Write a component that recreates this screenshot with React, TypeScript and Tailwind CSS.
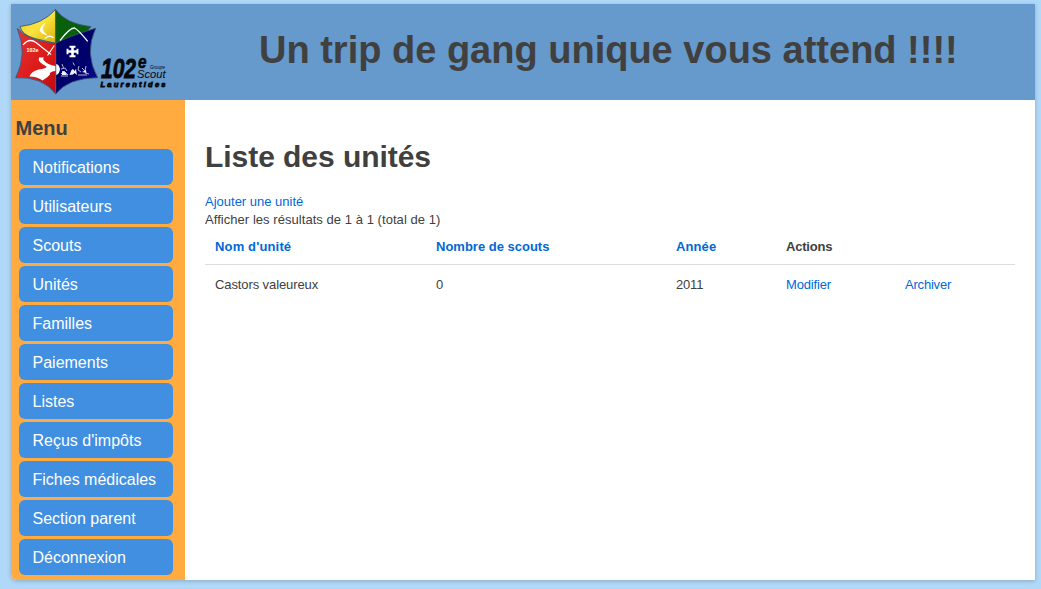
const menu = [
  'Notifications',
  'Utilisateurs',
  'Scouts',
  'Unités',
  'Familles',
  'Paiements',
  'Listes',
  "Reçus d'impôts",
  'Fiches médicales',
  'Section parent',
  'Déconnexion',
];

function Logo() {
  return (
    <svg width="160" height="96" viewBox="0 0 160 96" className="shrink-0" aria-label="102e Groupe Scout Laurentides">
      <defs>
        <linearGradient id="yellow" x1="0" y1="0" x2="1" y2="1">
          <stop offset="0" stopColor="#e8c81c" />
          <stop offset="0.5" stopColor="#fae43c" />
          <stop offset="1" stopColor="#d8b010" />
        </linearGradient>
        <linearGradient id="red" x1="0" y1="0" x2="1" y2="1">
          <stop offset="0" stopColor="#e43434" />
          <stop offset="0.6" stopColor="#dc1818" />
          <stop offset="1" stopColor="#b80c10" />
        </linearGradient>
        <linearGradient id="blue" x1="0" y1="0" x2="1" y2="1">
          <stop offset="0" stopColor="#000064" />
          <stop offset="0.6" stopColor="#00006c" />
          <stop offset="1" stopColor="#10109c" />
        </linearGradient>
      </defs>
      <g stroke="#35506e" strokeWidth="0.8" strokeLinejoin="round">
        <path d="M44.500 5.500 Q32 20 9 22.500 Q11 31 24 34.500 L44.500 39.300 Z" fill="url(#yellow)" />
        <path d="M44.500 5.500 Q55 20 80 22.700 Q74 31 62 34 L44.500 39.300 Z" fill="#08600c" />
        <path d="M6.300 24.500 Q17 50 4.700 73.700 Q31 72 44.700 90 L44.700 39.300 Q17 37 6.300 24.500 Z" fill="url(#red)" />
        <path d="M44.700 39.300 Q56 33 84.700 24.200 Q73 49 86.700 73.700 Q57 74 44.700 90 Z" fill="url(#blue)" />
      </g>
      <path d="M44.600 6 V90" stroke="#4a6270" strokeWidth="1" />
      <path d="M34 19 Q23.500 28 35.500 30.800 Q28.500 26.500 34 19 Z" fill="#fff" stroke="#fff" strokeWidth="0.7" />
      <path d="M34 34.500 Q38.500 30 42.500 34" fill="none" stroke="#fff" strokeWidth="1.300" />
      <path d="M49 36.500 Q59 23.500 63.500 24 Q67 25.500 76.700 37.300" fill="none" stroke="#fff" strokeWidth="1.300" />
      <path d="M12 41 Q18 33.500 25 38.500 L40 50.500 M36.500 51.500 L43.300 41.500" fill="none" stroke="#fff" strokeWidth="1.200" />
      <path
        d="M28 53.500 L33 53.500 Q31 55.500 34 57.500 Q37 60.500 44.300 62 V67 Q37.500 68 39 70.500 L36.500 73 L31.500 76.500 Q26 72.500 18.500 72.500 Q20 67.500 27.500 65.500 Q36 64.500 35.500 62.500 Q26 58 28 53.500 Z"
        fill="#fff"
      />
      <path d="M45.200 60 Q48 60.500 49 65 Q48.500 70 45.200 71 Z" fill="#fff" />
      <text x="15.500" y="48" fill="#fff" fontSize="5" fontWeight="700" textLength="12" lengthAdjust="spacingAndGlyphs">
        102e
      </text>
      <path d="M61.500 43 V52 M56.500 47.500 H66.500" stroke="#fff" strokeWidth="2.600" />
      <path d="M58.500 42.700 H64.500 M58.500 52.300 H64.500 M56.500 44.700 V50.300 M66.500 44.700 V50.300" stroke="#fff" strokeWidth="1.900" />
      <g fill="none" stroke="#c4c4e4" strokeWidth="0.900">
        <path d="M51 60 l1.500 4 M50 65 l4 -1 2 3 M50 70 l3 -3 4 4 M50 72 h7" />
        <path d="M62 58.500 l1.500 3 M68 62 l-1 4 3 2 M71 64 l3 3 1 -5 M67 71 h9 M74 69 l4 1" />
      </g>
      <path d="M58.500 71 l2 -5 1.500 -1 1.500 2 1.500 -2 1 6 -2.500 -2 -1.500 1.500 Z M51 67 l3 1 2 3 h-5 Z M71 68 l4 -2 0.500 3 Z" fill="#eeeefa" />
      <g fill="#05080c" fontFamily="Liberation Sans, sans-serif" fontStyle="italic">
        <text x="90" y="74" fontSize="28.500" fontWeight="700" stroke="#05080c" strokeWidth="0.900" textLength="35" lengthAdjust="spacingAndGlyphs">
          102
        </text>
        <text x="127" y="63.500" fontSize="18" fontWeight="700" stroke="#05080c" strokeWidth="0.600" textLength="8.500" lengthAdjust="spacingAndGlyphs">
          e
        </text>
        <text x="139" y="64.500" fontSize="4.500" textLength="15" lengthAdjust="spacingAndGlyphs">
          Groupe
        </text>
        <text x="126" y="74.300" fontSize="11.500" textLength="28.500" lengthAdjust="spacingAndGlyphs">
          Scout
        </text>
        <text x="89.500" y="82.800" fontSize="7.500" fontWeight="700" stroke="#05080c" strokeWidth="0.800" textLength="65">
          Laurentides
        </text>
      </g>
    </svg>
  );
}

function Link({ children }: { children: string }) {
  return (
    <a href="#" className="text-[#0069d6]">
      {children}
    </a>
  );
}

export default function App() {
  return (
    <div className="h-[589px] overflow-hidden bg-[#b0d8f8] pt-1 pr-1.5 pl-[11px] font-['Liberation_Sans',Arial,sans-serif] text-[13px] leading-[18px] text-[#404040]">
      <div className="flex h-[576px] flex-col overflow-hidden rounded-bl-md bg-white shadow-[0_1px_4px_rgba(0,0,0,0.22)]">
        <header className="flex h-24 shrink-0 items-center bg-[#6699cc]">
          <Logo />
          <h1 className="ml-[88px] pb-1 text-[38px] leading-none font-bold whitespace-nowrap">
            Un trip de gang unique vous attend !!!!
          </h1>
        </header>
        <div className="flex min-h-0 flex-1">
          <nav className="w-[174px] shrink-0 bg-[#ffab40] pt-2.5">
            <h3 className="pl-[4.5px] text-[20px] leading-9 font-bold">Menu</h3>
            <ul className="mt-[3px] ml-2 flex w-[154px] flex-col gap-[3px]">
              {menu.map((item) => (
                <li key={item}>
                  <a href="#" className="block h-9 rounded-md bg-[#418fe1] pl-[13.5px] text-base leading-[38px] whitespace-nowrap text-white">
                    {item}
                  </a>
                </li>
              ))}
            </ul>
          </nav>
          <main className="flex-1 px-5 pt-[39px]">
            <h1 className="text-[30px] leading-9 font-bold tracking-[-0.05px]">Liste des unités</h1>
            <p className="mt-[18px]">
              <Link>Ajouter une unité</Link>
            </p>
            <p className="tracking-[0.05px]">Afficher les résultats de 1 à 1 (total de 1)</p>
            <table className="w-full table-fixed border-collapse text-left">
              <colgroup>
                <col className="w-[221px]" />
                <col className="w-[240px]" />
                <col className="w-[110px]" />
                <col className="w-[119px]" />
                <col />
              </colgroup>
              <thead>
                <tr className="h-[35px] font-bold">
                  <th className="px-2.5 pt-0.5 tracking-[0.15px]"><Link>Nom d'unité</Link></th>
                  <th className="px-2.5 pt-0.5"><Link>Nombre de scouts</Link></th>
                  <th className="px-2.5 pt-0.5 tracking-[0.1px]"><Link>Année</Link></th>
                  <th className="px-2.5 pt-0.5 tracking-[-0.2px]" colSpan={2}>Actions</th>
                </tr>
              </thead>
              <tbody>
                <tr className="h-10 border-t border-[#dddddd]">
                  <td className="px-2.5 pt-0.5 tracking-[-0.1px]">Castors valeureux</td>
                  <td className="px-2.5 pt-0.5">0</td>
                  <td className="px-2.5 pt-0.5 tracking-[-0.2px]">2011</td>
                  <td className="px-2.5 pt-0.5 tracking-[-0.15px]"><Link>Modifier</Link></td>
                  <td className="px-2.5 pt-0.5 tracking-[-0.2px]"><Link>Archiver</Link></td>
                </tr>
              </tbody>
            </table>
          </main>
        </div>
      </div>
    </div>
  );
}
